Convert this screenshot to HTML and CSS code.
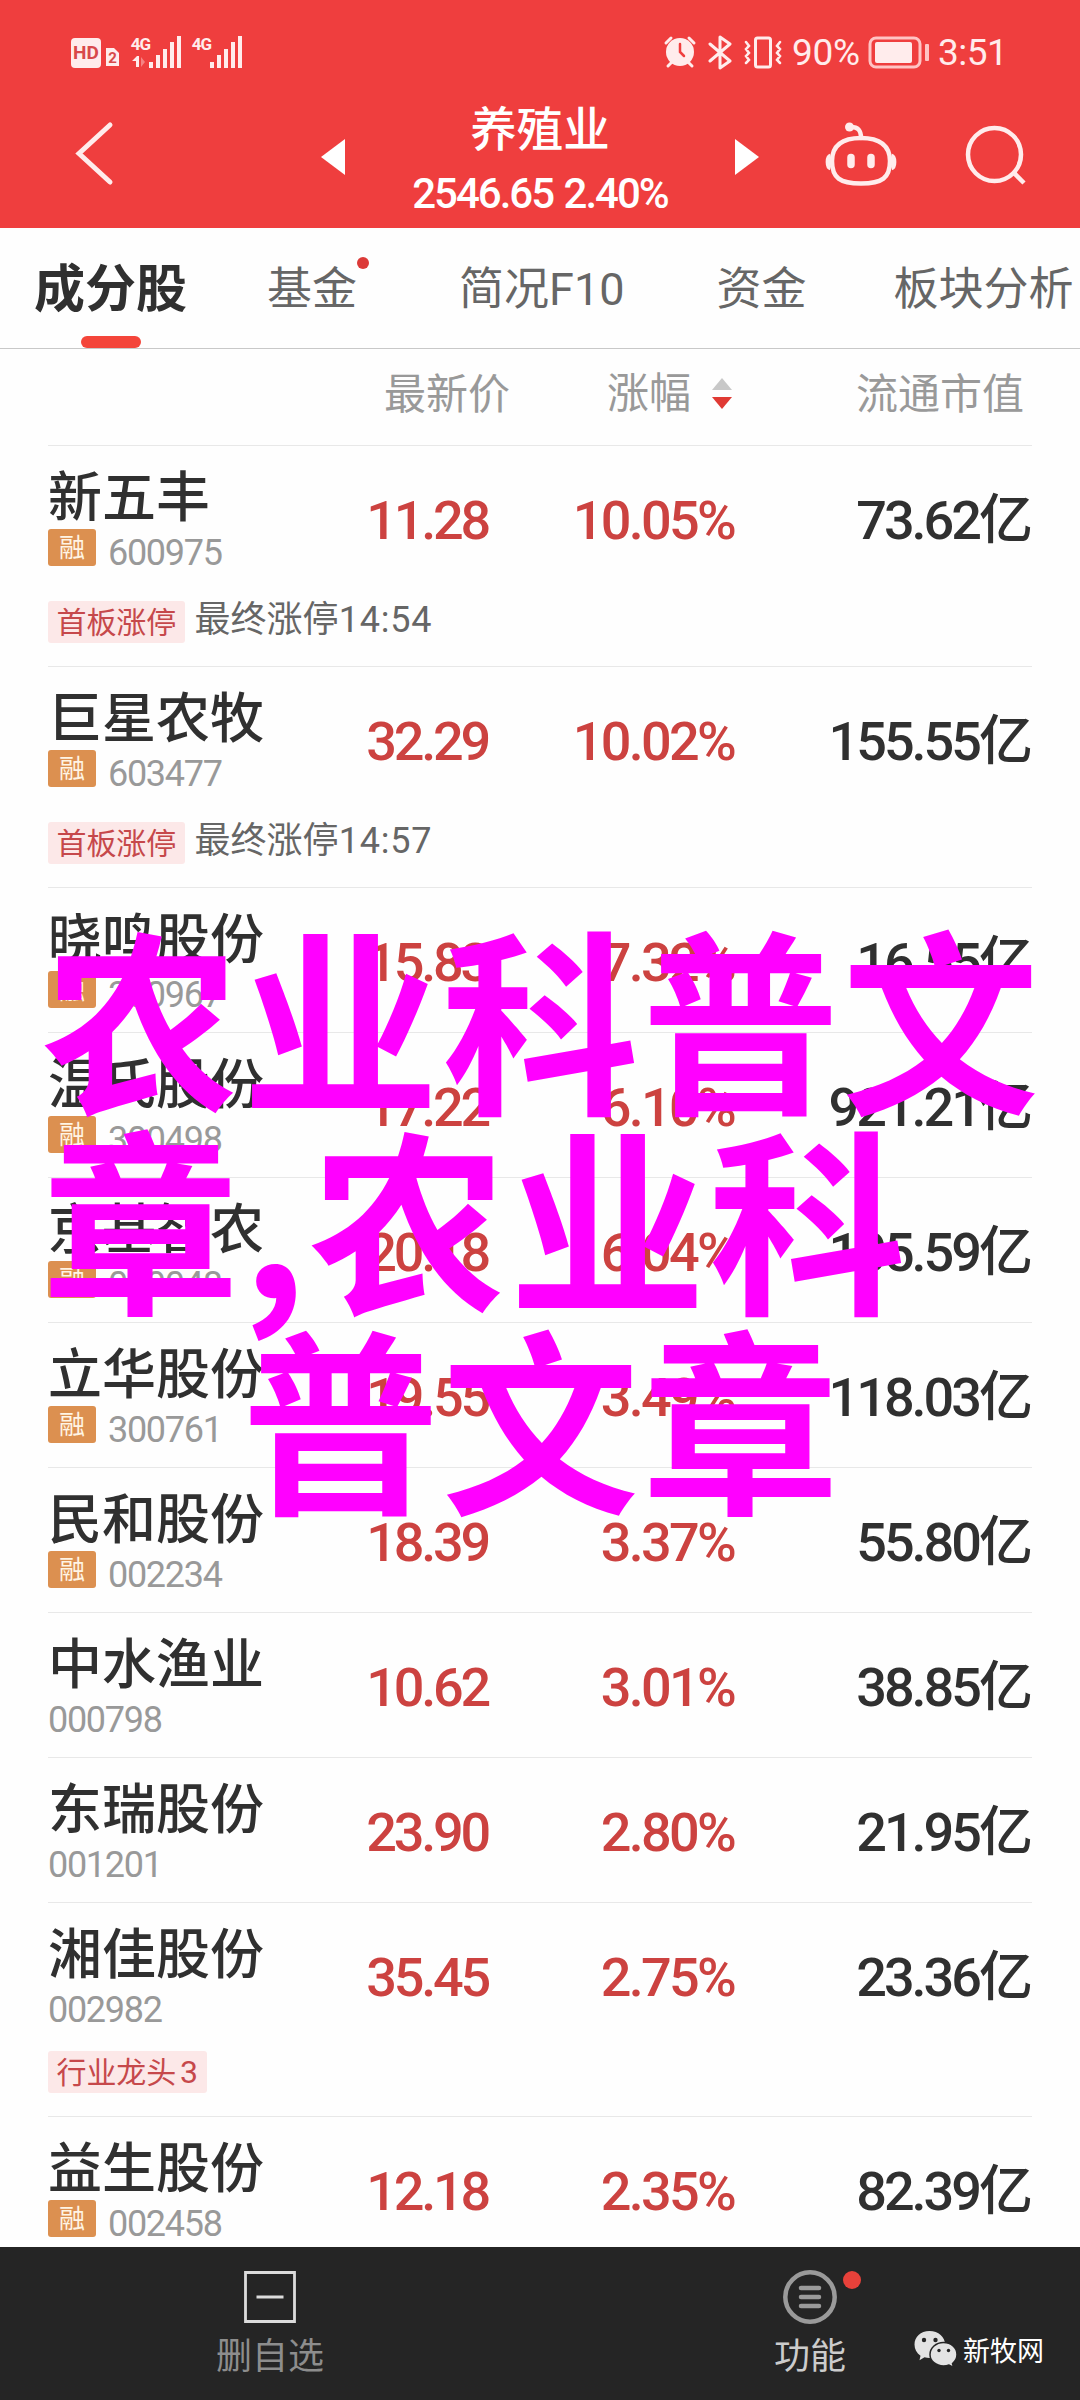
FILE: index.html
```html
<!DOCTYPE html>
<html lang="zh-CN">
<head>
<meta charset="utf-8">
<title>养殖业</title>
<link rel="stylesheet" href="styles.css">
</head>
<body>
<div class="screen">
  <header class="top">
    <div class="status">
      <svg class="status-left" width="175" height="36" viewBox="70 34 175 36" fill="#ffecec">
        <rect x="71" y="38" width="30" height="30" rx="4"/>
        <text x="86" y="59" class="hd">HD</text>
        <path d="M106 48h8l5 5v13h-13z"/>
        <text x="112.500" y="62.500" class="sim">2</text>
        <text x="140.500" y="50" class="net">4G</text>
        <path d="M132 61l5-5h2v11h-3v-6z"/><path d="M141 57v10l4-5z" opacity=".4"/>
        <path d="M149 62h4v6h-4zM156 55h4v13h-4zM163 49h4v19h-4zM170 42h4v26h-4zM177 36h4v32h-4z"/>
        <text x="201.500" y="50" class="net">4G</text>
        <path d="M210 62h4v6h-4zM217 55h4v13h-4zM224 49h4v19h-4zM231 42h4v26h-4zM238 36h4v32h-4z"/>
      </svg>
      <div class="status-right">
        <svg width="120" height="36" viewBox="663 34 120 36" fill="none" stroke="#ffecec" stroke-width="3" stroke-linecap="round">
          <circle cx="680" cy="52" r="14" fill="#ffecec" stroke="none"/>
          <path d="M666 43l5-5M694 43l-5-5M668 66l4-4M692 66l-4-4"/>
          <path d="M680 44v8l4 4" stroke="#ef3e3e" stroke-width="2.500"/>
          <path d="M710 44l20 17-10 7V37l10 7-20 17" stroke-linejoin="round"/>
          <rect x="755.500" y="38" width="15" height="29" rx="2"/>
          <path d="M746 42l3 4-3 3 3 4-3 3 3 4-3 3M780 42l-3 4 3 3-3 4 3 3-3 4 3 3" stroke-width="2.500"/>
        </svg>
        <span class="battery-text">90%</span>
        <svg class="battery" width="62" height="34" viewBox="868 35 62 34">
          <rect x="870" y="38" width="50" height="29" rx="6" fill="none" stroke="#ffc4c4" stroke-width="3"/>
          <rect x="875" y="42" width="37" height="21" rx="2" fill="#ffecec"/>
          <rect x="925" y="44" width="4" height="17" rx="1" fill="#ffc4c4"/>
        </svg>
        <span class="clock">3:51</span>
      </div>
    </div>
    <div class="nav">
      <svg class="back" width="42" height="66" viewBox="74 120 42 66" fill="none" stroke="#ffecec" stroke-width="5" stroke-linecap="round"><path d="M110 125L79 153.500 110 182"/></svg>
      <svg class="prev" width="24" height="36" fill="#fff"><path d="M24 0v36L0 18z"/></svg>
      <div class="heading">
        <h1>养殖业</h1>
        <p>2546.65 2.40%</p>
      </div>
      <svg class="next" width="24" height="36" fill="#fff"><path d="M0 0v36l24-18z"/></svg>
      <svg class="robot" width="72" height="66" viewBox="825 122 72 66" fill="none" stroke="#ffecec" stroke-width="4.500">
        <path d="M861 138c19 0 29 8 29 23 0 17-8 22.500-29 22.500s-29-5.500-29-22.500c0-15 10-23 29-23z"/>
        <path d="M830.500 156c-3.500 1-3.500 11 0 12M891.500 156c3.500 1 3.500 11 0 12"/>
        <path d="M861 138c0-8-3-11-10-11" stroke-linecap="round"/><circle cx="849.500" cy="127" r="4.500" fill="#ffecec" stroke="none"/>
        <path d="M851 157.500v7M871 157.500v7" stroke-width="7.500" stroke-linecap="round"/>
      </svg>
      <svg class="search" width="62" height="64" viewBox="965 124 62 64" fill="none" stroke="#ffecec" stroke-width="4.500"><ellipse cx="994.500" cy="154.500" rx="26.500" ry="26.500"/><path d="M1013 172l11 11"/></svg>
    </div>
  </header>

  <nav class="tabs">
    <a class="tab active">成分股</a>
    <a class="tab dotted">基金</a>
    <a class="tab">简况F10</a>
    <a class="tab">资金</a>
    <a class="tab">板块分析</a>
  </nav>

  <main class="list">
    <div class="cols">
      <span class="c1">最新价</span>
      <span class="c2">涨幅<svg width="20" height="32" viewBox="0 0 20 32"><path d="M0 12L10 0l10 12z" fill="#c8c8c8"/><path d="M0 19h20L10 31z" fill="#e03a34"/></svg></span>
      <span class="c3">流通市值</span>
    </div>
    <section class="row tall">
      <div class="stock"><h2>新五丰</h2><div class="meta"><b>融</b><span>600975</span></div></div>
      <div class="up">11.28</div><div class="up pct">10.05%</div><div class="cap">73.62亿</div>
      <div class="note"><em>首板涨停</em><span>最终涨停<i>14:54</i></span></div>
    </section>
    <section class="row tall">
      <div class="stock"><h2>巨星农牧</h2><div class="meta"><b>融</b><span>603477</span></div></div>
      <div class="up">32.29</div><div class="up pct">10.02%</div><div class="cap">155.55亿</div>
      <div class="note"><em>首板涨停</em><span>最终涨停<i>14:57</i></span></div>
    </section>
    <section class="row">
      <div class="stock"><h2>晓鸣股份</h2><div class="meta"><b>融</b><span>300967</span></div></div>
      <div class="up">15.83</div><div class="up pct">7.32%</div><div class="cap">16.55亿</div>
    </section>
    <section class="row">
      <div class="stock"><h2>温氏股份</h2><div class="meta"><b>融</b><span>300498</span></div></div>
      <div class="up">17.22</div><div class="up pct">6.10%</div><div class="cap">921.21亿</div>
    </section>
    <section class="row">
      <div class="stock"><h2>京基智农</h2><div class="meta"><b>融</b><span>000048</span></div></div>
      <div class="up">20.18</div><div class="up pct">6.04%</div><div class="cap">105.59亿</div>
    </section>
    <section class="row">
      <div class="stock"><h2>立华股份</h2><div class="meta"><b>融</b><span>300761</span></div></div>
      <div class="up">19.55</div><div class="up pct">3.49%</div><div class="cap">118.03亿</div>
    </section>
    <section class="row">
      <div class="stock"><h2>民和股份</h2><div class="meta"><b>融</b><span>002234</span></div></div>
      <div class="up">18.39</div><div class="up pct">3.37%</div><div class="cap">55.80亿</div>
    </section>
    <section class="row">
      <div class="stock"><h2>中水渔业</h2><div class="meta"><span>000798</span></div></div>
      <div class="up">10.62</div><div class="up pct">3.01%</div><div class="cap">38.85亿</div>
    </section>
    <section class="row">
      <div class="stock"><h2>东瑞股份</h2><div class="meta"><span>001201</span></div></div>
      <div class="up">23.90</div><div class="up pct">2.80%</div><div class="cap">21.95亿</div>
    </section>
    <section class="row leader">
      <div class="stock"><h2>湘佳股份</h2><div class="meta"><span>002982</span></div></div>
      <div class="up">35.45</div><div class="up pct">2.75%</div><div class="cap">23.36亿</div>
      <div class="note"><em>行业龙头<i>3</i></em></div>
    </section>
    <section class="row last">
      <div class="stock"><h2>益生股份</h2><div class="meta"><b>融</b><span>002458</span></div></div>
      <div class="up">12.18</div><div class="up pct">2.35%</div><div class="cap">82.39亿</div>
    </section>
  </main>

  <footer class="bar">
    <div class="action remove">
      <svg width="52" height="52" fill="none" stroke="#dcdcdc" stroke-width="2.800"><path d="M1.500 1.500h49v49h-49zM12.500 26h27"/></svg>
      <span>删自选</span>
    </div>
    <div class="action func">
      <svg width="54" height="54" viewBox="-27 -27 54 54" fill="none" stroke="#9a9a9a" stroke-width="4.500" stroke-linecap="round"><circle r="24.700"/><path d="M-9-9H9M-9 0H9M-9 9H9"/></svg>
      <span>功能</span>
    </div>
    <div class="brand">
      <svg width="44" height="40" viewBox="913 2329 44 40"><path fill="#e3e3e3" d="M929.500 2331c9 0 15.500 6 15.500 13.500s-6.500 13.500-15.500 13.500q-2.500 0-5-.7l-5 3 1-4.500c-4-3-6-6.500-6-11.300 0-7.500 6-13.500 15-13.500z"/><path fill="#e3e3e3" stroke="#252525" stroke-width="1.500" d="M943.500 2342.500c7.500 0 13.500 5 13.500 12 0 4-2 7-4.500 9l1 4-4.500-2.500q-2.500 1-5.500 1c-7.500 0-13.500-5-13.500-11.500s6-12 13.500-12z"/><g fill="#252525"><circle cx="924" cy="2340" r="2.200"/><circle cx="935.500" cy="2340" r="2.200"/><circle cx="939" cy="2350.500" r="1.700"/><circle cx="948.500" cy="2350.500" r="1.700"/></g></svg>
      <span>新牧网</span>
    </div>
  </footer>

  <div class="overlay"><p>农业科普文</p><p>章,农业科</p><p class="mid">普文章</p></div>
</div>
</body>
</html>
```
FILE: styles.css
```css
* { box-sizing: border-box; margin: 0; padding: 0; }
body { background: #fefefe; font-family: Roboto, "Noto Sans CJK SC", sans-serif; color: #303030; }
svg { display: block; flex: none; }
.screen { position: relative; display: flex; flex-direction: column; width: 1080px; height: 2400px; overflow: hidden; }

.top { height: 228px; background: #ef3e3e; color: #fff; display: flex; flex-direction: column; flex: none; }
.status { display: flex; justify-content: space-between; height: 70px; padding: 34px 76px 0 70px; color: #ffecec; }
.status text { text-anchor: middle; font-weight: 700; }
.hd { font-size: 19px; fill: #d8494a; }
.sim { font-size: 15px; fill: #d8494a; }
.net { font-size: 17px; letter-spacing: -1px; }
.status-right { display: flex; height: 36px; line-height: 38px; font-size: 37px; }
.battery-text { width: 75px; padding-left: 9px; letter-spacing: -.3px; }
.battery { margin: 1px 0 0 10px; }
.clock { width: 74px; padding-left: 8px; letter-spacing: -.5px; }
.nav { display: flex; align-items: flex-start; padding: 36px 53px 0 74px; }
.back { margin-top: 14px; }
.prev { margin: 33px 0 0 205px; }
.heading { width: 390px; padding-top: 1px; text-align: center; }
.heading h1 { font-size: 46.5px; line-height: 46px; font-weight: 500; }
.heading p { margin-top: 16px; font-size: 42px; line-height: 50px; font-weight: 500; letter-spacing: -2px; word-spacing: 2px; }
.next { margin-top: 33px; }
.robot { margin: 16px 0 0 66px; }
.search { margin: 18px 0 0 68px; }

.tabs { flex: none; display: flex; height: 121px; padding-left: 34px; border-bottom: 1px solid #c8c8c8; font-size: 45px; line-height: 124px; color: #666; white-space: nowrap; }
.tab { position: relative; height: 120px; margin-right: 92px; }
.tab:nth-child(4) { margin-right: 87px; }
.tab.active { font-size: 51px; font-weight: 700; color: #303030; margin-right: 80px; }
.tab.active::after { content: ""; position: absolute; left: 47px; bottom: 0; width: 60px; height: 12px; border-radius: 6px; background: #f4453a; }
.tab.dotted { margin-right: 102px; }
.tab.dotted::after { content: ""; position: absolute; left: 90px; top: 29px; width: 12px; height: 12px; border-radius: 50%; background: #dc3a38; }

.list { flex: none; height: 1898px; padding: 0 48px; overflow: hidden; }
.cols { height: 97px; border-bottom: 1px solid #e8e8e8; display: grid; grid-template-columns: 462px 222px 292px; justify-content: start; line-height: 92px; font-size: 42px; color: #999; text-align: right; }
.c2 { display: flex; gap: 21px; justify-content: flex-end; align-items: center; height: 90px; }
.row { display: grid; grid-template-columns: 300px 140px 246px 296px; grid-template-rows: 144px auto; height: 145px; border-bottom: 1px solid #e8e8e8; }
.row.tall { height: 221px; }
.row.leader { height: 214px; }
.stock { padding-top: 23px; }
.stock h2 { font-size: 54px; line-height: 60px; font-weight: 500; white-space: nowrap; }
.meta { display: flex; height: 37px; font-size: 36px; line-height: 49px; letter-spacing: -1.3px; color: #999; }
.meta b { width: 48px; margin-right: 12px; border-radius: 3px; background: #dc9050; color: #fff4e4; font-size: 26px; font-weight: 400; line-height: 38px; text-align: center; letter-spacing: 0; }
.up, .cap { font-size: 54px; line-height: 60px; font-weight: 500; text-align: right; letter-spacing: -3.2px; padding-top: 45px; white-space: nowrap; }
.up { color: #cc4240; }
.up.pct { letter-spacing: -2.7px; }
.cap { color: #303030; letter-spacing: -3px; }
.note { grid-column: 1 / -1; display: flex; gap: 10px; height: 42px; margin-top: 11px; font-size: 36px; line-height: 31px; color: #666; }
.note span { font-family: "Noto Sans CJK SC", sans-serif; }
.note span i { font: 400 36px/31px Roboto, sans-serif; letter-spacing: .8px; }
.note em { height: 42px; padding: 0 8.5px; border-radius: 3px; background: #fce8e8; color: #c6484b; font: 400 30px/39px "Noto Sans CJK SC", sans-serif; letter-spacing: -.1px; }
.note em i { font: 400 32px/36px Roboto, sans-serif; margin-left: 4px; }
.leader .note { margin-top: 4px; }

.bar { flex: none; position: relative; height: 153px; background: #252525; display: flex; }
.action { display: flex; flex-direction: column; align-items: center; font-size: 36px; line-height: 50px; }
.remove { width: 540px; padding-top: 24px; color: #8d8d8d; }
.func { position: relative; width: 540px; padding-top: 23px; color: #ccc; }
.func::after { content: ""; position: absolute; left: 303px; top: 24px; width: 18px; height: 18px; border-radius: 50%; background: #e8413a; }
.action span { margin-top: 9px; }
.func span { margin-top: 8px; }
.brand { position: absolute; left: 913px; top: 82px; display: flex; gap: 6px; font-size: 27px; line-height: 46px; color: #fff; }

.overlay { position: absolute; left: 42px; top: 913px; width: 1000px; font: 700 197px/200px "Noto Sans CJK SC", sans-serif; letter-spacing: 3px; color: #f0f; white-space: nowrap; }
.overlay .mid { text-align: center; }
```
